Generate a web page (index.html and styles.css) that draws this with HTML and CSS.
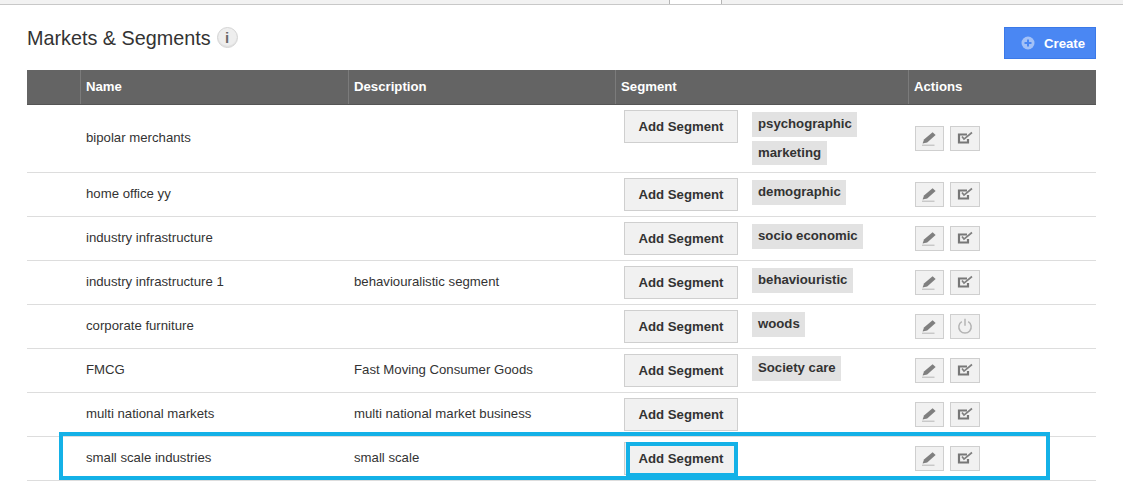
FILE: index.html
```html
<!DOCTYPE html>
<html lang="en">
<head>
<meta charset="utf-8">
<title>Markets &amp; Segments</title>
<link rel="stylesheet" href="styles.css">
</head>
<body>
<svg class="defs" width="0" height="0" aria-hidden="true">
  <symbol id="i-edit" viewBox="0 0 16 16">
    <path d="M10.6 2.2l3 2.8-8.4 7.4-4.6 1.2 1.4-4z" fill="#7f7f7f"/>
    <path d="M0 15.2h12.5" stroke="#b5b5b5" stroke-width="1" fill="none"/>
  </symbol>
  <symbol id="i-check" viewBox="0 0 16 16">
    <path d="M10 4.5H2v8h9V9" fill="none" stroke="#777" stroke-width="2.2"/>
    <path d="M5 6.5l2 2.6L15 2.5" fill="none" stroke="#808080" stroke-width="1.7"/>
  </symbol>
  <symbol id="i-power" viewBox="0 0 16 16">
    <path d="M4.8 3.6a6.2 6.2 0 1 0 6.4 0" fill="none" stroke="#b4b4b4" stroke-width="1.5"/>
    <path d="M8 .8v7" stroke="#b4b4b4" stroke-width="1.5" fill="none"/>
  </symbol>
</svg>

<div class="topbar"><span class="tab"></span></div>

<main class="page">
  <header class="head">
    <h1 class="title">Markets &amp; Segments</h1>
    <span class="info">i</span>
    <button class="create" type="button">
      <svg class="plus" viewBox="0 0 14 14" aria-hidden="true"><circle cx="7" cy="7" r="6.5" fill="#a3c1f7"/><path d="M7 3.5v7M3.5 7h7" stroke="#4a87f3" stroke-width="2"/></svg>
      Create
    </button>
  </header>

  <table class="grid">
    <colgroup><col class="c0"><col class="c1"><col class="c2"><col class="c3"><col class="c4"></colgroup>
    <thead>
      <tr><th></th><th>Name</th><th>Description</th><th>Segment</th><th>Actions</th></tr>
    </thead>
    <tbody>
      <tr class="tall">
        <td></td><td>bipolar merchants</td><td></td>
        <td class="seg"><div class="segwrap"><button class="add" type="button">Add Segment</button><div class="tags"><span class="tag">psychographic</span><span class="tag tag-short">marketing</span></div></div></td>
        <td class="act"><div class="acts"><a class="ib ib1"><svg><use href="#i-edit"/></svg></a><a class="ib ib2"><svg><use href="#i-check"/></svg></a></div></td>
      </tr>
      <tr>
        <td></td><td>home office yy</td><td></td>
        <td class="seg"><div class="segwrap"><button class="add" type="button">Add Segment</button><div class="tags"><span class="tag">demographic</span></div></div></td>
        <td class="act"><div class="acts"><a class="ib ib1"><svg><use href="#i-edit"/></svg></a><a class="ib ib2"><svg><use href="#i-check"/></svg></a></div></td>
      </tr>
      <tr>
        <td></td><td>industry infrastructure</td><td></td>
        <td class="seg"><div class="segwrap"><button class="add" type="button">Add Segment</button><div class="tags"><span class="tag">socio economic</span></div></div></td>
        <td class="act"><div class="acts"><a class="ib ib1"><svg><use href="#i-edit"/></svg></a><a class="ib ib2"><svg><use href="#i-check"/></svg></a></div></td>
      </tr>
      <tr>
        <td></td><td>industry infrastructure 1</td><td>behaviouralistic segment</td>
        <td class="seg"><div class="segwrap"><button class="add" type="button">Add Segment</button><div class="tags"><span class="tag">behaviouristic</span></div></div></td>
        <td class="act"><div class="acts"><a class="ib ib1"><svg><use href="#i-edit"/></svg></a><a class="ib ib2"><svg><use href="#i-check"/></svg></a></div></td>
      </tr>
      <tr>
        <td></td><td>corporate furniture</td><td></td>
        <td class="seg"><div class="segwrap"><button class="add" type="button">Add Segment</button><div class="tags"><span class="tag">woods</span></div></div></td>
        <td class="act"><div class="acts"><a class="ib ib1"><svg><use href="#i-edit"/></svg></a><a class="ib ib2"><svg><use href="#i-power"/></svg></a></div></td>
      </tr>
      <tr>
        <td></td><td>FMCG</td><td>Fast Moving Consumer Goods</td>
        <td class="seg"><div class="segwrap"><button class="add" type="button">Add Segment</button><div class="tags"><span class="tag">Society care</span></div></div></td>
        <td class="act"><div class="acts"><a class="ib ib1"><svg><use href="#i-edit"/></svg></a><a class="ib ib2"><svg><use href="#i-check"/></svg></a></div></td>
      </tr>
      <tr>
        <td></td><td>multi national markets</td><td>multi national market business</td>
        <td class="seg"><div class="segwrap"><button class="add" type="button">Add Segment</button></div></td>
        <td class="act"><div class="acts"><a class="ib ib1"><svg><use href="#i-edit"/></svg></a><a class="ib ib2"><svg><use href="#i-check"/></svg></a></div></td>
      </tr>
      <tr>
        <td></td><td>small scale industries</td><td>small scale</td>
        <td class="seg"><div class="segwrap"><button class="add" type="button">Add Segment</button></div></td>
        <td class="act"><div class="acts"><a class="ib ib1"><svg><use href="#i-edit"/></svg></a><a class="ib ib2"><svg><use href="#i-check"/></svg></a></div></td>
      </tr>
    </tbody>
  </table>
</main>

<div class="mark mark-row"></div>
<div class="mark mark-btn"></div>
</body>
</html>
```

FILE: styles.css
```css
* { box-sizing: border-box; }
html, body { margin: 0; padding: 0; background: #fff; }
body {
  position: relative;
  height: 499px;
  overflow: hidden;
  font-family: "Liberation Sans", Arial, sans-serif;
  font-size: 13.2px;
  color: #333;
}
.defs { position: absolute; }

.topbar {
  height: 5px;
  background: #f2f2f2;
  border-bottom: 1px solid #c8c8c8;
  display: flex;
  padding-left: 669px;
}
.tab {
  width: 53px;
  height: 4px;
  background: #fff;
  border-left: 1px solid #b5b5b5;
  border-right: 1px solid #b5b5b5;
}

.page { padding: 0 27px; }

.head {
  display: flex;
  align-items: flex-start;
  height: 65px;
}
.title {
  margin: 21px 0 0;
  font-size: 19.8px;
  line-height: 24px;
  font-weight: 400;
  color: #333;
}
.info {
  margin: 22px 0 0 6px;
  width: 21px;
  height: 21px;
  border-radius: 50%;
  background: #eee;
  border: 1px solid #d4d4d4;
  box-shadow: inset 0 -1px 1px #ddd;
  color: #6a6a6a;
  font: 700 15px/19px "Liberation Sans", Arial, sans-serif;
  text-align: center;
}
.create {
  margin: 22px 0 0 auto;
  width: 92px;
  height: 32px;
  padding: 0 0 0 16px;
  display: flex;
  align-items: center;
  gap: 9px;
  background: #4a87f3;
  border: 1px solid #3b79e8;
  color: #fff;
  font: 700 13.2px "Liberation Sans", Arial, sans-serif;
}
.plus { width: 14px; height: 14px; }

.grid {
  width: 1069px;
  border-collapse: collapse;
  table-layout: fixed;
}
.c0 { width: 53px; }
.c1 { width: 268px; }
.c2 { width: 267px; }
.c3 { width: 293px; }
.c4 { width: 188px; }

th {
  height: 34px;
  padding: 0 0 1px 5.5px;
  background: #646464;
  color: #fff;
  font-weight: 700;
  text-align: left;
  border-left: 1px solid #7b7b7b;
  border-bottom: 1px solid #555;
}
th:first-child { border-left: 0; }

td {
  height: 44px;
  padding: 0 0 2px 6px;
  border-bottom: 1px solid #ddd;
  vertical-align: middle;
}
.tall td { height: 68px; }

td.seg { padding: 5px 0 0 9px; vertical-align: top; }
.segwrap { display: flex; align-items: flex-start; gap: 14px; }

.add {
  flex: none;
  width: 114px;
  height: 33px;
  padding: 0;
  background: #f1f1f1;
  border: 1px solid #cfcfcf;
  color: #333;
  font: 700 13.2px "Liberation Sans", Arial, sans-serif;
}

.tags {
  display: flex;
  flex-direction: column;
  align-items: flex-start;
  gap: 4px;
  padding-top: 2px;
}
.tag {
  height: 25px;
  padding: 0 5.5px 3px 6px;
  line-height: 23px;
  background: #e2e2e2;
  color: #333;
  font-weight: 700;
}
.tag-short { height: 24px; }

td.act { padding: 0 0 0 7px; }
.acts { display: flex; gap: 6px; }
.ib {
  display: flex;
  align-items: center;
  justify-content: center;
  height: 25px;
  background: #f1f1f1;
  border: 1px solid #cfcfcf;
}
.ib1 { width: 29px; }
.ib2 { width: 30px; }
.ib svg { width: 16px; height: 16px; }

.mark {
  position: absolute;
  border: 4px solid #14b1e7;
}
.mark-row { left: 59px; top: 432px; width: 991px; height: 48px; }
.mark-btn { left: 626px; top: 442px; width: 112px; height: 35px; }
```
